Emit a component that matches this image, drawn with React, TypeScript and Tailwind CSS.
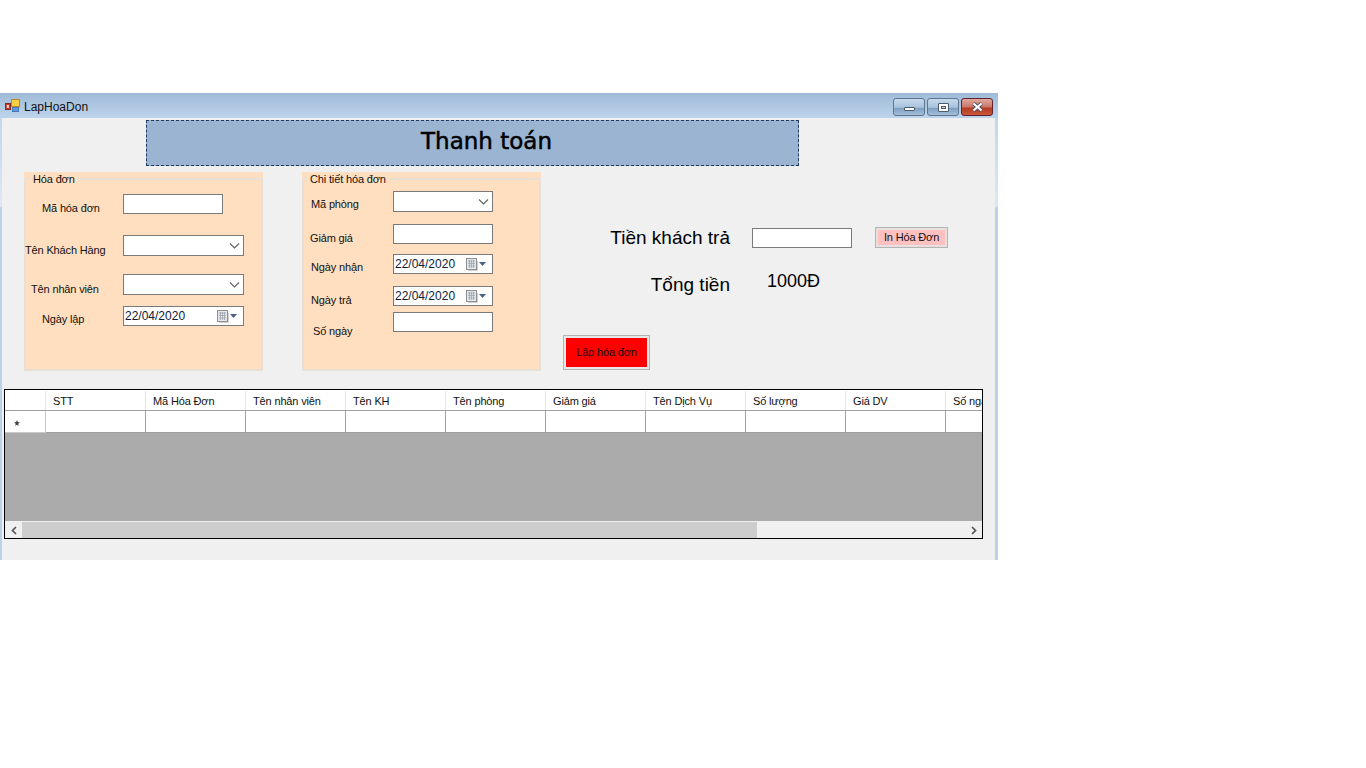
import React from "react";

const Chevron = () => (
  <svg width="11" height="6" viewBox="0 0 11 6" className="shrink-0" fill="none" stroke="#606060" strokeWidth="1.1">
    <path d="M1 0.5 L5.5 5 L10 0.5" />
  </svg>
);

const TextInput = () => <div className="h-[20px] w-[100px] shrink-0 border border-[#7a7a7a] bg-white" />;

const Combo = ({ wide }: { wide?: boolean }) => (
  <div className={`flex h-[21px] shrink-0 items-center justify-end border border-[#7a7a7a] bg-white pr-[3px] ${wide ? "w-[121px]" : "w-[100px]"}`}>
    <Chevron />
  </div>
);

const DateBox = ({ wide }: { wide?: boolean }) => (
  <div className={`flex h-[20px] shrink-0 items-center border border-[#7a7a7a] bg-white pl-[1px] text-[#0b1a3a] ${wide ? "w-[121px]" : "w-[100px]"}`}>
    <span className="flex-1 whitespace-nowrap text-[12px]">22/04/2020</span>
    <svg width="21" height="13" viewBox="0 0 21 13" className="mr-[5px] shrink-0">
      <rect x="0.5" y="0.5" width="10" height="11" fill="#e4e8ec" stroke="#8f8f8f" />
      <path d="M2 3h7M2 5.5h7M2 8h7M3.5 2v8M5.5 2v8M7.5 2v8" stroke="#a0a5ab" strokeWidth="0.8" />
      <path d="M11.5 3v9.5H2" stroke="#cfcfcf" fill="none" />
      <path d="M13 4h7l-3.5 4z" fill="#4d6185" />
    </svg>
  </div>
);

const Row = ({ label, labelClass, className, children }: { label: string; labelClass: string; className: string; children: React.ReactNode }) => (
  <div className={`flex ${className}`}>
    <div className={`shrink-0 whitespace-nowrap text-[11px] leading-[14px] tracking-[-0.15px] text-[#111] ${labelClass}`}>{label}</div>
    {children}
  </div>
);

const Group = ({ title, legendX, children, className }: { title: string; legendX: string; children: React.ReactNode; className: string }) => (
  <div className={`h-[199px] w-[239px] shrink-0 bg-[#ffdfc0] ${className}`}>
    <fieldset className="h-[199px] border-2 border-[#e8dfd6]">
      <legend className={`h-[14px] px-[3px] text-[11px] leading-[14px] tracking-[-0.15px] text-[#111] ${legendX}`}>{title}</legend>
      {children}
    </fieldset>
  </div>
);

const WinBtn = ({ children, close }: { children: React.ReactNode; close?: boolean }) => (
  <div
    className={`flex h-[18px] w-[32px] items-center justify-center rounded-[3px] border ${
      close
        ? "border-[#5e2230] bg-[linear-gradient(to_bottom,#e0a99b_0%,#c9766a_50%,#b53a22_56%,#c9583a_100%)]"
        : "border-[#5f7690] bg-[linear-gradient(to_bottom,#c6d9ec_0%,#a9c3de_52%,#7f9fc0_58%,#a3bfdb_100%)]"
    }`}
  >
    {children}
  </div>
);

const columns = ["STT", "Mã Hóa Đơn", "Tên nhân viên", "Tên KH", "Tên phòng", "Giảm giá", "Tên Dịch Vụ", "Số lượng", "Giá DV", "Số ngày"];

export default function App() {
  return (
    <div className="h-[768px] w-[1366px] overflow-hidden bg-white pt-[93px] font-['Liberation_Sans',Arial,sans-serif]">
      <div className="h-[467px] w-[998px] bg-[linear-gradient(to_bottom,#b9d1ea_0px,#dde8f4_113px,#b9d1ea_115px)]">
        {/* Title bar */}
        <div className="flex h-[25px] items-center bg-gradient-to-b from-[#9fbad8] to-[#bdd4ec] pl-[5px] pr-[5px]">
          <svg width="15" height="13" viewBox="0 0 15 13" className="shrink-0">
            <rect x="0.5" y="4.5" width="5" height="6" fill="#d8352a" stroke="#7d2a2a" />
            <rect x="1.8" y="6" width="2" height="3" fill="#f5e6d0" />
            <rect x="6.5" y="0.5" width="8" height="7" fill="#f7cf45" stroke="#b98a20" />
            <rect x="7.5" y="8.5" width="6" height="4" fill="#5d9be0" stroke="#4a78b4" />
          </svg>
          <span className="ml-[4px] pt-[2px] text-[12px] text-[#111]">LapHoaDon</span>
          <div className="ml-auto flex gap-[2px] pt-[3px]">
            <WinBtn>
              <div className="mt-[4px] h-[4px] w-[11px] rounded-[1px] border border-[#4a5a6c] bg-white" />
            </WinBtn>
            <WinBtn>
              <div className="flex h-[9px] w-[11px] items-center justify-center rounded-[1px] border border-[#4a5a6c] bg-white">
                <div className="h-[3px] w-[5px] border border-[#4a5a6c] bg-[#c9d6e4]" />
              </div>
            </WinBtn>
            <WinBtn close>
              <svg width="13" height="10" viewBox="0 0 13 10">
                <path d="M2.5 1.5 L10.5 8.5 M10.5 1.5 L2.5 8.5" stroke="#4d4d5c" strokeWidth="4" />
                <path d="M2.5 1.5 L10.5 8.5 M10.5 1.5 L2.5 8.5" stroke="#ffffff" strokeWidth="2.2" />
              </svg>
            </WinBtn>
          </div>
        </div>

        {/* Client area */}
        <div className="ml-[2px] h-[442px] w-[993px] bg-[#f0f0f0] pt-[2px]">
          <div className="ml-[144px] flex h-[46px] w-[653px] items-center justify-center border border-dashed border-[#1f3a5f] bg-[#9ab4d1] pl-[28px] pb-[4px]">
            <span className="font-['DejaVu_Sans',sans-serif] text-[23px] font-medium text-black [-webkit-text-stroke:0.5px_black]">Thanh toán</span>
          </div>

          <div className="mt-[6px] flex">
            <Group title="Hóa đơn" legendX="ml-[4px]" className="ml-[22px]">
              <Row label="Mã hóa đơn" labelClass="w-[97px] pl-[16px] pt-[7px]" className="mt-[8px]">
                <TextInput />
              </Row>
              <Row label="Tên Khách Hàng" labelClass="-ml-[1px] w-[98px] pt-[8px]" className="mt-[20px]">
                <Combo wide />
              </Row>
              <Row label="Tên nhân viên" labelClass="w-[97px] pl-[5px] pt-[8px]" className="mt-[17px]">
                <Combo wide />
              </Row>
              <Row label="Ngày lập" labelClass="w-[97px] pl-[16px] pt-[6px]" className="mt-[10px]">
                <DateBox wide />
              </Row>
            </Group>

            <Group title="Chi tiết hóa đơn" legendX="ml-[3px]" className="ml-[39px]">
              <Row label="Mã phòng" labelClass="w-[89px] pl-[7px] pt-[6px]" className="mt-[5px]">
                <Combo />
              </Row>
              <Row label="Giảm giá" labelClass="w-[89px] pl-[6px] pt-[7px]" className="mt-[12px]">
                <TextInput />
              </Row>
              <Row label="Ngày nhận" labelClass="w-[89px] pl-[7px] pt-[6px]" className="mt-[9px]">
                <DateBox />
              </Row>
              <Row label="Ngày trả" labelClass="w-[89px] pl-[7px] pt-[7px]" className="mt-[12px]">
                <DateBox />
              </Row>
              <Row label="Số ngày" labelClass="w-[89px] pl-[9px] pt-[12px]" className="mt-[5px]">
                <TextInput />
              </Row>
            </Group>

            <div className="flex-1">
              <div className="mt-[55px] flex h-[21px] items-center">
                <div className="w-[189px] whitespace-nowrap text-right text-[19px] leading-[21px] text-black">Tiền khách trả</div>
                <div className="ml-[22px]">
                  <TextInput />
                </div>
                <div className="ml-[23px] h-[21px] w-[73px] border border-[#b4b4b4] bg-[#e6e0e0] p-[2px]">
                  <div className="flex h-full items-center justify-center bg-[#ffc0c0] text-[11px] tracking-[-0.15px] text-[#111]">In Hóa Đơn</div>
                </div>
              </div>
              <div className="mt-[23px] flex items-start">
                <div className="w-[189px] whitespace-nowrap pt-[3px] text-right text-[19px] leading-[21px] text-black">Tổng tiền</div>
                <div className="ml-[37px] text-[18px] leading-[21px] text-black">1000Đ</div>
              </div>
              <div className="ml-[22px] mt-[40px] h-[35px] w-[87px] border border-[#b4b4b4] bg-[#e8e8e8] p-[2px]">
                <div className="flex h-full items-center justify-center bg-[#ff0000] text-[11px] tracking-[-0.15px] text-[#111]">Lập hóa đơn</div>
              </div>
            </div>
          </div>

          {/* Data grid */}
          <div className="ml-[2px] mt-[18px] flex h-[150px] w-[979px] flex-col overflow-hidden border border-black bg-[#ababab]">
            <div className="flex h-[21px] shrink-0 overflow-hidden border-b border-[#a0a0a0] bg-white pt-[1px]">
              <div className="h-full w-[41px] shrink-0 border-r border-[#e5e5e5]" />
              {columns.map((c) => (
                <div key={c} className="w-[100px] shrink-0 overflow-hidden whitespace-nowrap border-r border-[#e5e5e5] pl-[7px] text-[11px] leading-[20px] tracking-[-0.15px] text-[#111]">
                  {c}
                </div>
              ))}
            </div>
            <div className="flex h-[22px] shrink-0 overflow-hidden">
              <div className="flex h-full w-[41px] shrink-0 items-center border-b border-r border-[#c8c8c8] bg-white pl-[9px] pt-[2px]">
                <svg width="6" height="6" viewBox="0 0 5 5"><path d="M2.5 0 L3.2 1.7 L5 2 L3.5 3.1 L4 5 L2.5 3.9 L1 5 L1.5 3.1 L0 2 L1.8 1.7z" fill="#444" /></svg>
              </div>
              {columns.map((c) => (
                <div key={c} className="h-full w-[100px] shrink-0 border-b border-r border-[#a0a0a0] bg-white" />
              ))}
            </div>
            <div className="flex-1" />
            <div className="flex h-[17px] shrink-0 items-center border-t border-[#f0f0f0] bg-[#f0f0f0]">
              <div className="flex w-[17px] shrink-0 justify-center">
                <svg width="6" height="9" viewBox="0 0 6 9" fill="none" stroke="#555" strokeWidth="1.7"><path d="M5 1 L1.5 4.5 L5 8" /></svg>
              </div>
              <div className="h-full w-[735px] shrink-0 bg-[#cdcdcd]" />
              <div className="flex-1" />
              <div className="flex w-[17px] shrink-0 justify-center">
                <svg width="6" height="9" viewBox="0 0 6 9" fill="none" stroke="#555" strokeWidth="1.7"><path d="M1 1 L4.5 4.5 L1 8" /></svg>
              </div>
            </div>
          </div>
        </div>
      </div>
    </div>
  );
}
